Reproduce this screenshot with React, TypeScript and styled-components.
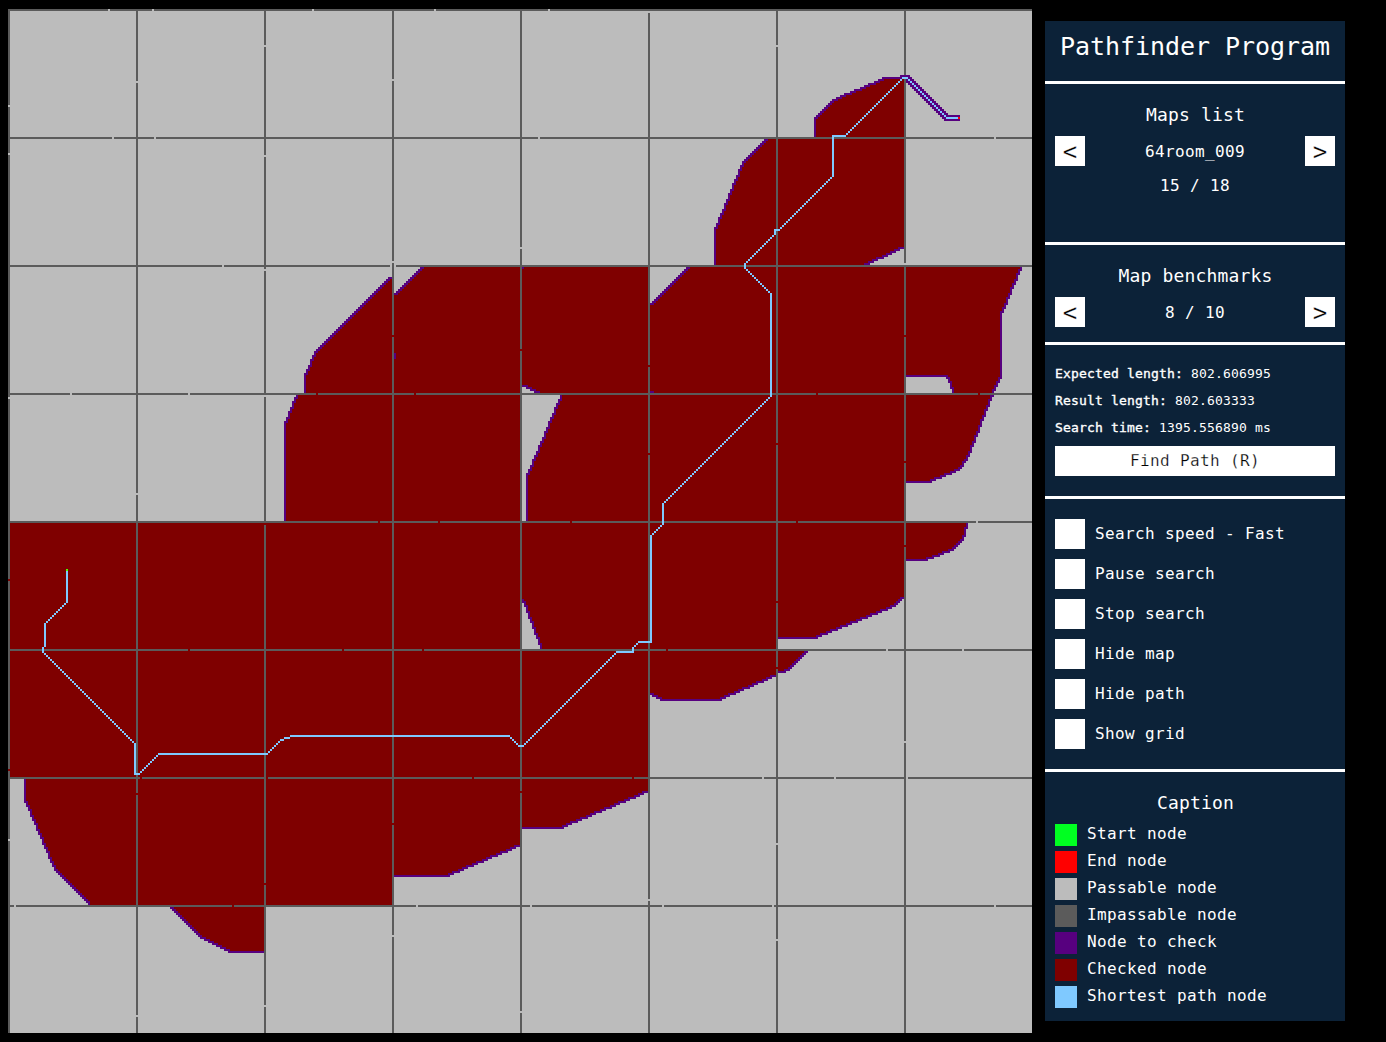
import React from "react";
import styled, { createGlobalStyle } from "styled-components";

const color = {
  panel: "#0c2238",
  start: "#00ff21",
  end: "#ff0000",
  passable: "#bcbcbc",
  wall: "#5b5b5b",
  open: "#57007f",
  closed: "#7f0000",
  path: "#7fc9ff",
};

const GlobalStyle = createGlobalStyle`
  body {
    margin: 0;
    background: #000;
    overflow: hidden;
  }
`;

const Screen = styled.main`
  display: flex;
  gap: 13px;
  align-items: flex-start;
  box-sizing: border-box;
  width: 1386px;
  height: 1042px;
  padding: 9px 0 0 8px;
  background: #000;
  color: #fff;
  font-family: "DejaVu Sans Mono", monospace;
`;

const MapView = styled.svg`
  display: block;
  flex: none;
  width: 1024px;
  height: 1024px;
`;

const Panel = styled.aside`
  width: 300px;
  height: 1000px;
  margin-top: 12px;
  background: ${color.panel};
`;

const Section = styled.section<{ $height: number }>`
  display: flex;
  flex-direction: column;
  box-sizing: border-box;
  height: ${(p) => p.$height}px;
  padding: 0 10px;

  & + & {
    border-top: 3px solid #fff;
  }
`;

const Title = styled.h1`
  margin: 8px -10px 0;
  font-size: 25px;
  font-weight: 400;
  line-height: 36px;
  letter-spacing: -0.05px;
  text-align: center;
  white-space: nowrap;
`;

const Heading = styled.h2`
  margin: 20px 0 10px;
  padding-left: 1px;
  font-size: 18px;
  font-weight: 400;
  line-height: 22px;
  letter-spacing: 0.163px;
  text-align: center;
`;

const Label = styled.span`
  font-size: 16px;
  line-height: 30px;
  letter-spacing: 0.367px;
  white-space: pre;
`;

const PickerLabel = styled(Label)`
  line-height: 32px;
`;

const Counter = styled(Label)`
  margin-top: 5px;
  text-align: center;
`;

const Picker = styled.div`
  display: flex;
  justify-content: space-between;
  height: 30px;
`;

const ArrowButton = styled.button`
  width: 30px;
  height: 30px;
  padding: 1px 0 0;
  border: 0;
  background: #fff;
  color: #000;
  font: 24px/30px "DejaVu Sans Mono", monospace;
  text-align: center;
  -webkit-text-stroke: 0.3px #fff;
`;

const Stats = styled.div`
  display: flex;
  flex-direction: column;
  margin-top: 15px;
`;

const Stat = styled.div`
  font-size: 13px;
  line-height: 27px;
  letter-spacing: 0.173px;
  white-space: pre;
`;

const StatName = styled.span`
  -webkit-text-stroke: 0.35px #fff;
`;

const RunButton = styled.button`
  height: 30px;
  margin-top: 5px;
  padding: 0;
  border: 0;
  background: #fff;
  color: #000;
  font: 16px/30px "DejaVu Sans Mono", monospace;
  letter-spacing: 0.367px;
  -webkit-text-stroke: 0.25px #fff;
`;

const Options = styled.div`
  display: flex;
  flex-direction: column;
  gap: 10px;
  margin-top: 20px;
`;

const Option = styled.div`
  display: flex;
  gap: 10px;
`;

const Toggle = styled.button`
  width: 30px;
  height: 30px;
  padding: 0;
  border: 0;
  background: #fff;
`;

const Legend = styled.div`
  display: flex;
  flex-direction: column;
  gap: 5px;
`;

const LegendRow = styled.div`
  display: flex;
  gap: 10px;
  height: 22px;
`;

const Swatch = styled.span<{ $color: string }>`
  width: 22px;
  background: ${(p) => p.$color};
`;

const LegendLabel = styled(Label)`
  line-height: 20px;
`;

type Point = [number, number];

const distance = (a: Point, b: Point) => Math.hypot(a[0] - b[0], a[1] - b[1]);

/**
 * Walks a polyline over the cell grid and returns the cells it crosses.
 * With a centre given, diagonal steps are squared off on the side facing it.
 */
function walk(points: Point[], centre?: Point): Point[] {
  const cells: Point[] = [points[0]];
  for (let i = 1; i < points.length; i++) {
    const [x0, y0] = points[i - 1];
    const [x1, y1] = points[i];
    const n = Math.max(Math.abs(x1 - x0), Math.abs(y1 - y0));
    let [px, py] = points[i - 1];
    for (let k = 1; k <= n; k++) {
      const x = Math.round(x0 + ((x1 - x0) * k) / n);
      const y = Math.round(y0 + ((y1 - y0) * k) / n);
      if (centre && x !== px && y !== py) {
        const a: Point = [px, y];
        const b: Point = [x, py];
        cells.push(distance(a, centre) < distance(b, centre) ? a : b);
      }
      cells.push([x, y]);
      px = x;
      py = y;
    }
  }
  return cells;
}

const cellPath = (cells: Point[]) => cells.map(([x, y]) => `M${x} ${y}h1v1h-1z`).join("");

const polygon = (points: Point[]) =>
  points.map(([x, y], i) => `${i ? "L" : "M"}${x + 0.5} ${y + 0.5}`).join("") + "z";

/** Centre of the 64-cell room that an edge lies in. */
const roomCentre = (edge: Point[]): Point => {
  const mx = edge.reduce((s, p) => s + p[0], 0) / edge.length;
  const my = edge.reduce((s, p) => s + p[1], 0) / edge.length;
  return [Math.floor(mx / 64) * 64 + 32, Math.floor(my / 64) * 64 + 32];
};

/** Expanded rooms: the open frontier and the wall corners closing the area. */
const rooms: { edge: Point[]; corners: Point[]; centre?: Point }[] = [
  { edge: [[403, 63], [403, 54], [412, 45], [438, 34], [447, 34]], corners: [[448, 34], [448, 64], [403, 64]], centre: [440, 60] },
  { edge: [[353, 127], [353, 110], [367, 76], [379, 64]], corners: [[384, 64], [384, 128], [353, 128]], centre: [384, 110] },
  { edge: [[427, 128], [447, 119]], corners: [[448, 119], [448, 64], [384, 64], [384, 128]] },
  { edge: [[506, 129], [496, 153], [496, 183], [492, 192], [479, 225], [475, 230], [460, 236], [449, 236]], corners: [[448, 236], [448, 128], [506, 128]], centre: [450, 180] },
  { edge: [[321, 147], [340, 128]], corners: [[384, 128], [384, 192], [320, 192], [320, 147]] },
  { edge: [[191, 134], [190, 134], [153, 171], [148, 183], [148, 191]], corners: [[148, 192], [192, 192], [192, 134]], centre: [190, 180] },
  { edge: [[144, 192], [138, 207], [138, 255]], corners: [[138, 256], [192, 256], [192, 192]], centre: [190, 240] },
  { edge: [[193, 142], [207, 128]], corners: [[256, 128], [256, 192], [192, 192], [192, 142]] },
  { edge: [[257, 188], [266, 192]], corners: [[320, 192], [320, 128], [256, 128], [256, 188]], centre: [288, 150] },
  { edge: [[276, 193], [259, 233], [259, 255]], corners: [[259, 256], [320, 256], [320, 192], [276, 192]], centre: [310, 240] },
  { edge: [[257, 295], [266, 319]], corners: [[266, 320], [320, 320], [320, 256], [256, 256], [256, 295]] },
  { edge: [[385, 314], [403, 314], [443, 298], [447, 294]], corners: [[448, 293], [448, 256], [384, 256], [384, 314]], centre: [400, 260] },
  { edge: [[479, 257], [477, 265], [472, 270], [458, 275], [449, 275]], corners: [[448, 275], [448, 256], [479, 256]], centre: [450, 255] },
  { edge: [[321, 342], [327, 345], [355, 345], [383, 333]], corners: [[384, 333], [384, 320], [320, 320], [320, 342]], centre: [344, 310] },
  { edge: [[385, 331], [388, 331], [391, 329], [399, 321]], corners: [[399, 320], [384, 320], [384, 331]], centre: [384, 320] },
  { edge: [[257, 409], [276, 409], [319, 391]], corners: [[320, 390], [320, 384], [256, 384], [256, 409]], centre: [270, 370] },
  { edge: [[193, 433], [219, 433], [255, 418]], corners: [[256, 418], [256, 384], [192, 384], [192, 433]], centre: [210, 390] },
  { edge: [[8, 385], [8, 395], [23, 430], [40, 447]], corners: [[40, 448], [64, 448], [64, 384], [8, 384]], centre: [60, 390] },
  { edge: [[81, 449], [96, 464], [111, 471], [127, 471]], corners: [[128, 471], [128, 448], [81, 448]], centre: [125, 440] },
];

const expanded =
  "M0 256H256V384H0z M256 320H320V384H256z M64 384H192V448H64z" +
  "M192 192H256V256H192z M320 192H448V256H320z M320 256H384V320H320z" +
  "M384 128H448V192H384z";

const pocket: Point[] = [[449, 183], [469, 183], [472, 191]];

const strays: Point[] = [[257, 129], [193, 172], [193, 173], [193, 174], [321, 191], [322, 191]];

const corridor: Point[] = [];
for (let x = 446; x <= 450; x++) corridor.push([x, 33]);
corridor.push([446, 34]);
for (let k = 0; k < 20; k++) {
  corridor.push([450 + k, 34 + k], [451 + k, 34 + k]);
  if (k > 0) corridor.push([448 + k, 34 + k]);
  if (k > 1) corridor.push([447 + k, 34 + k]);
}
corridor.push([467, 54], [468, 54]);
for (let x = 470; x <= 475; x++) corridor.push([x, 53]);
for (let x = 468; x <= 475; x++) corridor.push([x, 55]);

const route: Point[] = [
  [29, 281], [29, 296], [18, 307], [18, 318], [17, 319], [17, 321], [63, 367], [63, 382],
  [65, 382], [75, 372], [129, 372], [136, 365], [137, 365], [138, 364], [140, 364],
  [141, 363], [250, 363], [255, 368], [257, 368], [304, 321], [312, 321], [312, 319],
  [315, 316], [321, 316], [321, 263], [327, 257], [327, 247], [381, 193], [381, 142],
  [368, 129], [368, 127], [383, 112], [383, 110], [385, 110], [412, 83], [412, 63],
  [418, 63], [447, 34], [449, 34], [469, 54], [474, 54],
];

const grayGaps: Point[] = [
  [50, 0], [72, 0], [152, 0], [213, 0], [270, 0],
  [52, 64], [73, 64], [265, 64], [493, 64],
  [107, 128], [191, 128], [193, 128], [31, 192], [90, 192],
  [484, 256], [439, 320], [477, 320],
  [377, 384], [413, 384], [449, 384],
  [3, 448], [204, 448], [261, 448], [327, 448], [382, 448], [493, 448],
  [0, 48], [0, 72], [0, 194], [0, 415],
  [64, 36], [64, 242], [64, 503],
  [128, 18], [128, 73], [128, 130], [128, 193], [128, 498],
  [192, 35], [192, 126], [192, 463],
  [256, 119], [256, 501], [320, 0], [320, 64], [320, 445],
  [384, 18], [384, 417], [384, 465], [448, 127], [448, 366],
];

const redGaps: Point[] = [
  [154, 192], [203, 192], [404, 192], [485, 192],
  [185, 256], [215, 256], [281, 256], [394, 256],
  [90, 320], [167, 320], [207, 320], [329, 320],
  [66, 384], [129, 384], [232, 384], [312, 384], [112, 448],
  [0, 285], [0, 380], [64, 392], [128, 257], [128, 437],
  [192, 163], [192, 407], [256, 170], [256, 391],
  [320, 178], [320, 222], [384, 217], [384, 296], [384, 329],
  [448, 163], [448, 226], [448, 268],
];

/** Cells next to a crossing that stay walled. */
const wallPatches: Point[] = [[320, 0], [320, 64]];

const wallLines = [0, 64, 128, 192, 256, 320, 384, 448];

function PathMap() {
  return (
    <MapView viewBox="0 0 512 512" shapeRendering="crispEdges">
      <path fill={color.passable} d="M0 0H512V512H0z" />
      <path fill={color.closed} d={expanded} />
      {rooms.map((r, i) => (
        <path key={i} fill={color.closed} d={polygon([...r.edge, ...r.corners])} />
      ))}
      <path
        fill={color.passable}
        d={polygon([[448, 183], ...pocket, [472, 192], [448, 192]])}
      />
      {rooms.map((r, i) => (
        <path key={i} fill={color.open} d={cellPath(walk(r.edge, r.centre ?? roomCentre(r.edge)))} />
      ))}
      <path fill={color.open} d={cellPath(walk(pocket, [490, 170]))} />
      <path fill={color.open} d={cellPath(strays)} />
      <path
        fill={color.wall}
        d={wallLines.map((n) => `M${n} 0h1v512h-1zM0 ${n}h512v1h-512z`).join("")}
      />
      <path fill={color.passable} d={cellPath([...grayGaps, [320, 1]])} />
      <path fill={color.wall} d={cellPath(wallPatches)} />
      <path fill={color.closed} d={cellPath(redGaps)} />
      <path fill={color.open} d={cellPath(corridor)} />
      <path fill={color.path} d={cellPath(walk(route))} />
      <path fill="#4cff00" d="M29 280h1v1h-1z" />
      <path fill={color.end} d="M475 54h1v1h-1z" />
    </MapView>
  );
}

const stats = [
  ["Expected length:", "802.606995"],
  ["Result length:", "802.603333"],
  ["Search time:", "1395.556890 ms"],
];

const options = ["Search speed - Fast", "Pause search", "Stop search", "Hide map", "Hide path", "Show grid"];

const legend = [
  ["Start node", color.start],
  ["End node", color.end],
  ["Passable node", color.passable],
  ["Impassable node", color.wall],
  ["Node to check", color.open],
  ["Checked node", color.closed],
  ["Shortest path node", color.path],
];

export default function App() {
  return (
    <>
      <GlobalStyle />
      <Screen>
        <PathMap />
        <Panel>
          <Section $height={60}>
            <Title>Pathfinder Program</Title>
          </Section>
          <Section $height={161}>
            <Heading>Maps list</Heading>
            <Picker>
              <ArrowButton>&lt;</ArrowButton>
              <PickerLabel>64room_009</PickerLabel>
              <ArrowButton>&gt;</ArrowButton>
            </Picker>
            <Counter>15 / 18</Counter>
          </Section>
          <Section $height={100}>
            <Heading>Map benchmarks</Heading>
            <Picker>
              <ArrowButton>&lt;</ArrowButton>
              <PickerLabel>8 / 10</PickerLabel>
              <ArrowButton>&gt;</ArrowButton>
            </Picker>
          </Section>
          <Section $height={154}>
            <Stats>
              {stats.map(([name, value]) => (
                <Stat key={name}>
                  <StatName>{name}</StatName> {value}
                </Stat>
              ))}
            </Stats>
            <RunButton>Find Path (R)</RunButton>
          </Section>
          <Section $height={273}>
            <Options>
              {options.map((name) => (
                <Option key={name}>
                  <Toggle aria-label={name} />
                  <Label>{name}</Label>
                </Option>
              ))}
            </Options>
          </Section>
          <Section $height={252}>
            <Heading>Caption</Heading>
            <Legend>
              {legend.map(([name, fill]) => (
                <LegendRow key={name}>
                  <Swatch $color={fill} />
                  <LegendLabel>{name}</LegendLabel>
                </LegendRow>
              ))}
            </Legend>
          </Section>
        </Panel>
      </Screen>
    </>
  );
}
